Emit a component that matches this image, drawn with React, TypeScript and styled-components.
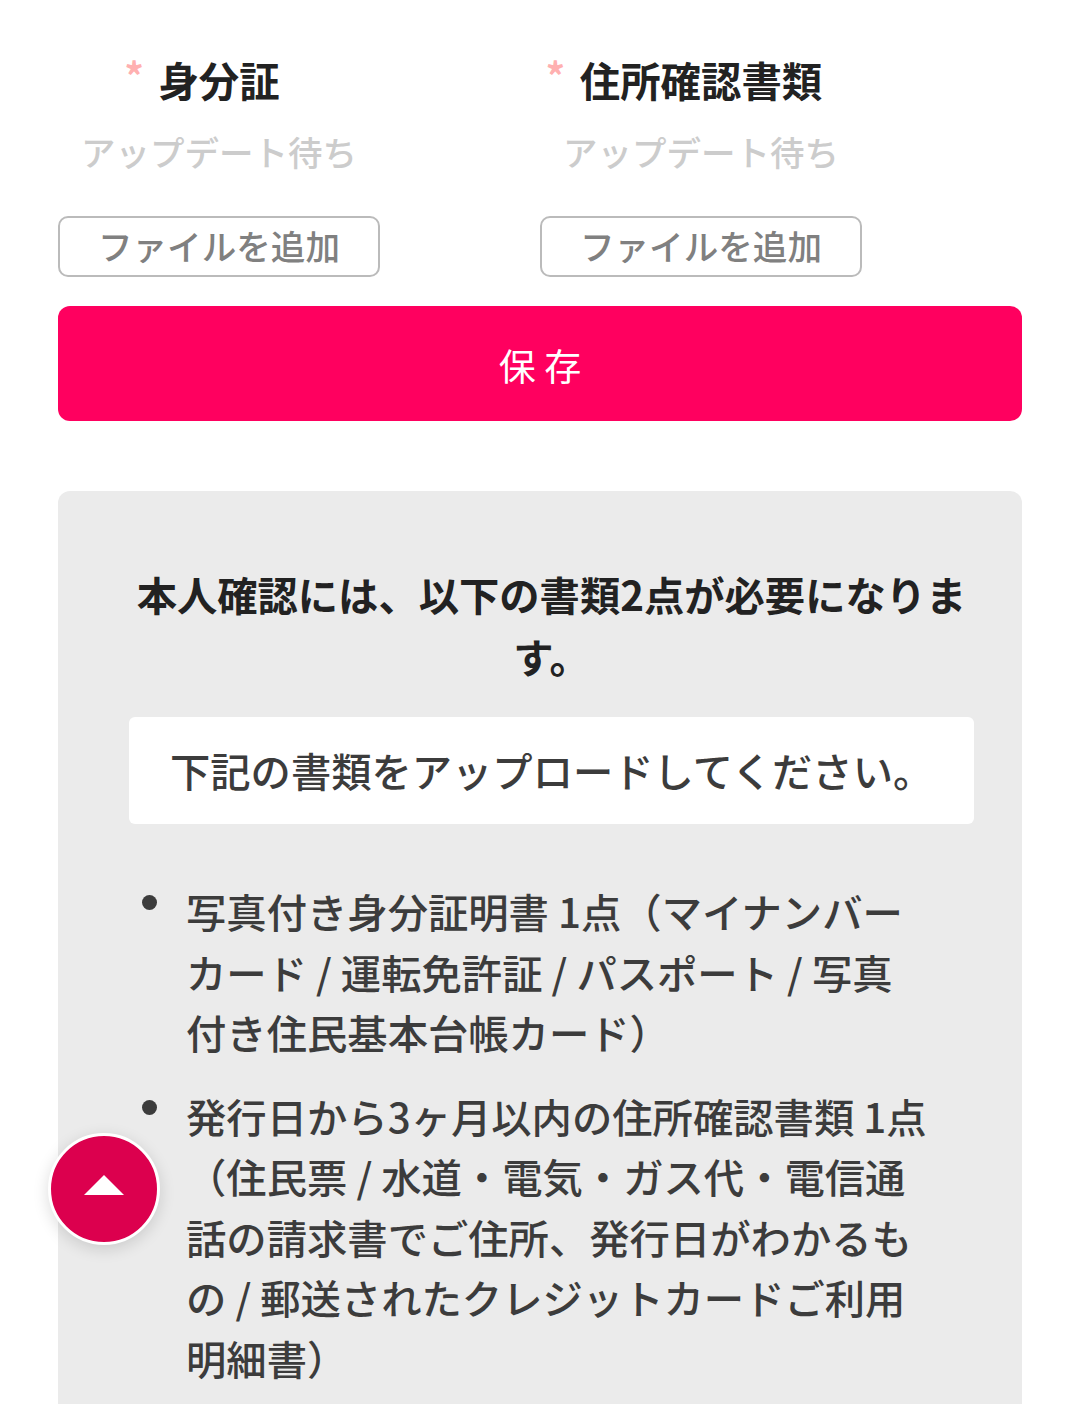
import React from 'react';
import styled, { createGlobalStyle } from 'styled-components';

const GlobalStyle = createGlobalStyle`
    html, body {
        margin: 0;
        padding: 0;
        background: white;
        height: 1404px;
        overflow: hidden;
        font-family: "Noto Sans CJK JP", "Noto Sans", sans-serif;
    }
`;

const Page = styled.div`
    padding: 50px 58px 0;
    box-sizing: border-box;
    height: 1404px;
    overflow: hidden;
`;

const UploadGrid = styled.div`
    display: grid;
    grid-template-columns: 482px 482px;
`;

const UploadColumn = styled.div`
    width: 322px;
    display: flex;
    flex-direction: column;
    align-items: center;
`;

const UploadTitle = styled.h4`
    position: relative;
    margin: 0;
    font-size: 40.4px;
    line-height: 60px;
    font-weight: 700;
    color: #222;
`;

const Required = styled.span`
    position: absolute;
    left: -34px;
    top: 1px;
    font-size: 38px;
    line-height: 48px;
    font-weight: 700;
    color: #ffb0b0;
`;

const Pending = styled.div`
    margin-top: 11px;
    font-size: 34.5px;
    line-height: 60px;
    font-weight: 500;
    color: #ccc;
`;

const AddButton = styled.button`
    margin-top: 35px;
    width: 322px;
    height: 61px;
    box-sizing: border-box;
    border: 2px solid #bbb;
    border-radius: 10px;
    background: white;
    color: #808080;
    font-family: inherit;
    font-size: 34.6px;
    font-weight: 500;
    line-height: 1;
    padding: 0 0 2px;
`;

const SaveButton = styled.button`
    display: block;
    width: 100%;
    height: 115px;
    margin-top: 29px;
    border: 0;
    border-radius: 12px;
    background: #ff005f;
    color: white;
    font-family: inherit;
    font-size: 37px;
    font-weight: 400;
    padding: 2px 0 0;
`;

const InfoPanel = styled.section`
    margin-top: 70px;
    background: #ebebeb;
    border-radius: 12px 12px 0 0;
    padding: 72px 48px 0 71px;
    height: 1000px;
`;

const InfoTitle = styled.h3`
    margin: 0 0 30px;
    width: 845px;
    font-size: 40.3px;
    line-height: 62px;
    font-weight: 700;
    color: #222;
    text-align: center;
`;

const Notice = styled.div`
    background: white;
    border-radius: 6px;
    height: 107px;
    display: flex;
    align-items: center;
    padding: 0 0 2px 41px;
    box-sizing: border-box;
    font-size: 40.3px;
    font-weight: 500;
    color: #3c3c3c;
`;

const DocList = styled.ul`
    list-style: none;
    margin: 57px 0 0;
    padding: 0 0 0 57px;
    width: 800px;
`;

const DocItem = styled.li`
    position: relative;
    width: 742px;
    font-size: 40.35px;
    line-height: 60.5px;
    font-weight: 500;
    color: #3c3c3c;
    margin-bottom: 23px;
    &::before {
        content: '';
        position: absolute;
        left: -44px;
        top: 14px;
        width: 15px;
        height: 15px;
        border-radius: 50%;
        background: #3c3c3c;
    }
`;

const TopButton = styled.button`
    position: absolute;
    left: 48px;
    top: 1133px;
    width: 112px;
    height: 112px;
    box-sizing: border-box;
    border: 3px solid white;
    border-radius: 50%;
    background: #dc004e;
    box-shadow: 0 4px 16px rgba(0, 0, 0, 0.14);
    padding: 0 0 8px;
    display: flex;
    align-items: center;
    justify-content: center;
`;

const App = () => {
    return (
        <Page>
            <GlobalStyle />
            <UploadGrid>
                <UploadColumn>
                    <UploadTitle><Required>*</Required>身分証</UploadTitle>
                    <Pending>アップデート待ち</Pending>
                    <AddButton>ファイルを追加</AddButton>
                </UploadColumn>
                <UploadColumn>
                    <UploadTitle><Required>*</Required>住所確認書類</UploadTitle>
                    <Pending>アップデート待ち</Pending>
                    <AddButton>ファイルを追加</AddButton>
                </UploadColumn>
            </UploadGrid>
            <SaveButton>保 存</SaveButton>
            <InfoPanel>
                <InfoTitle>本人確認には、以下の書類2点が必要になります。</InfoTitle>
                <Notice>下記の書類をアップロードしてください。</Notice>
                <DocList>
                    <DocItem>写真付き身分証明書 1点（マイナンバーカード / 運転免許証 / パスポート / 写真付き住民基本台帳カード）</DocItem>
                    <DocItem>発行日から3ヶ月以内の住所確認書類 1点（住民票 / 水道・電気・ガス代・電信通話の請求書でご住所、発行日がわかるもの / 郵送されたクレジットカードご利用明細書）</DocItem>
                </DocList>
            </InfoPanel>
            <TopButton>
                <svg width="40" height="20" viewBox="0 0 40 20"><path d="M20 0 L40 20 L0 20 Z" fill="white" /></svg>
            </TopButton>
        </Page>
    );
};

export default App;
